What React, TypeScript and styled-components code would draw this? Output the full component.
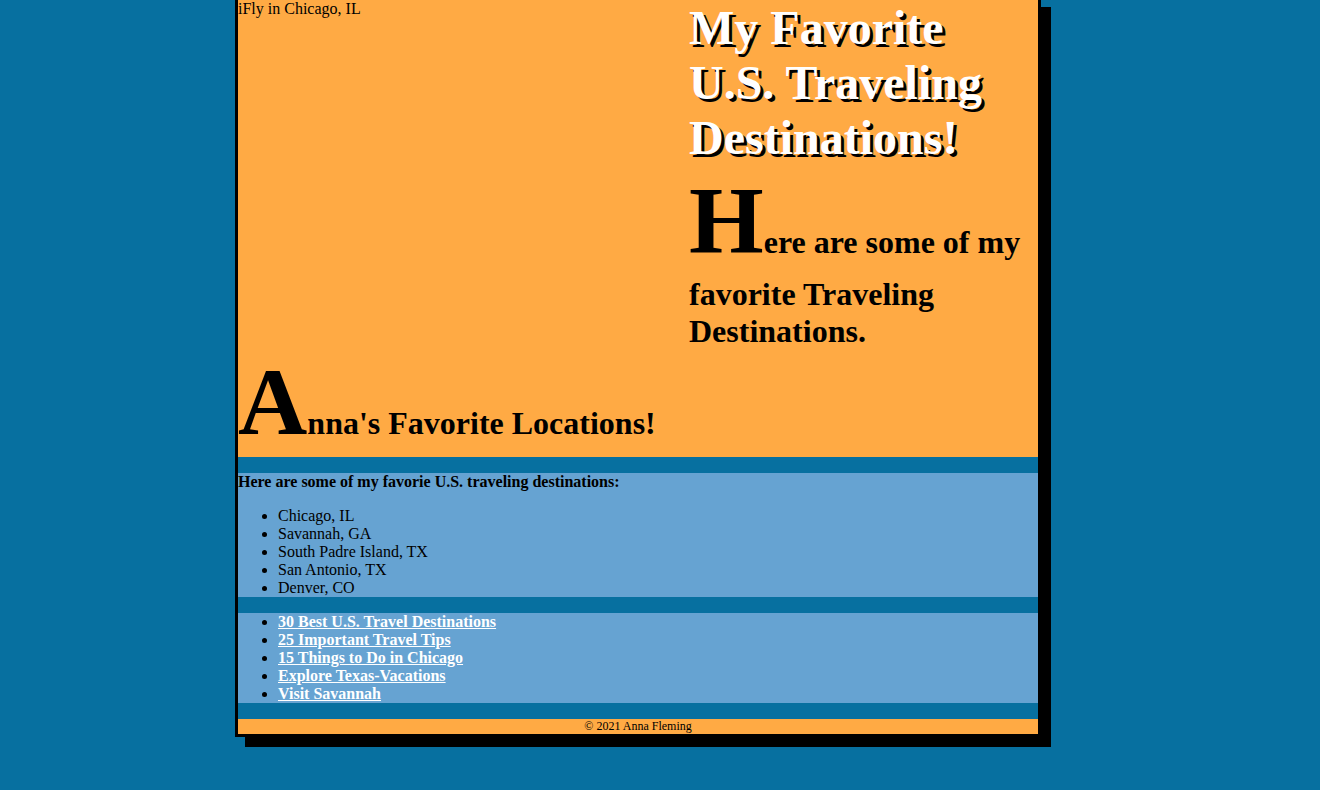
import React from 'react';
import styled, { createGlobalStyle } from 'styled-components';

const GlobalStyle = createGlobalStyle`
  html, body {
    margin: 0;
    padding: 0;
    background: #0770a0;
  }
  body {
    min-height: 100vh;
    padding-bottom: 20px;
    box-sizing: border-box;
    font-family: "Liberation Serif", "Times New Roman", serif;
    font-size: 16px;
    color: #000;
  }
`;

const Page = styled.div`
  width: 800px;
  margin: -3px 0 0 235px;
  border: 3px solid #000;
  box-shadow: 10px 10px 0 #000;
  background: #0770a0;
  display: flex;
  flex-direction: column;
  gap: 16px;
`;

const Header = styled.header`
  background: #ffaa44;
  display: grid;
  grid-template-columns: 451px 1fr;
  align-items: start;
`;

const LeftColumn = styled.div`
  display: flex;
  flex-direction: column;
`;

const BrokenImage = styled.div`
  height: 346px;
  line-height: normal;
`;

const DropCapHeading = styled.h1<{ $size: number }>`
  margin: 0;
  font-size: ${props => props.$size}px;
  font-weight: bold;

  &::first-letter {
    font-size: 3em;
  }
`;

const Title = styled.h1`
  margin: 0;
  font-size: 48px;
  font-weight: bold;
  color: #fff;
  text-shadow: 3px 3px 0 #000;
`;

const Section = styled.section`
  background: #66a3d2;
`;

const Intro = styled.p`
  margin: 0 0 16px;
  font-weight: bold;
`;

const List = styled.ul<{ $bold?: boolean }>`
  margin: 0;
  padding-left: 40px;
  list-style: disc;
  font-weight: ${props => (props.$bold ? 'bold' : 'normal')};
`;

const LinkItem = styled.a`
  color: #fff;
  font-weight: bold;
  text-decoration: underline;
`;

const Footer = styled.footer`
  background: #ffaa44;
  text-align: center;
  font-size: 12px;
  line-height: 15px;
`;

const destinations = [
  'Chicago, IL',
  'Savannah, GA',
  'South Padre Island, TX',
  'San Antonio, TX',
  'Denver, CO',
];

const links = [
  '30 Best U.S. Travel Destinations',
  '25 Important Travel Tips',
  '15 Things to Do in Chicago',
  'Explore Texas-Vacations',
  'Visit Savannah',
];

export default function App() {
  return (
    <>
      <GlobalStyle />
      <Page>
        <Header>
          <LeftColumn>
            <BrokenImage>iFly in Chicago, IL</BrokenImage>
            <DropCapHeading $size={32}>Anna's Favorite Locations!</DropCapHeading>
          </LeftColumn>
          <div>
            <Title>My Favorite U.S. Traveling Destinations!</Title>
            <DropCapHeading as="h2" $size={32}>
              Here are some of my favorite Traveling Destinations.
            </DropCapHeading>
          </div>
        </Header>

        <Section>
          <Intro>Here are some of my favorie U.S. traveling destinations:</Intro>
          <List>
            {destinations.map(d => (
              <li key={d}>{d}</li>
            ))}
          </List>
        </Section>

        <Section>
          <List $bold>
            {links.map(l => (
              <li key={l}>
                <LinkItem href="#">{l}</LinkItem>
              </li>
            ))}
          </List>
        </Section>

        <Footer>&copy; 2021 Anna Fleming</Footer>
      </Page>
    </>
  );
}
